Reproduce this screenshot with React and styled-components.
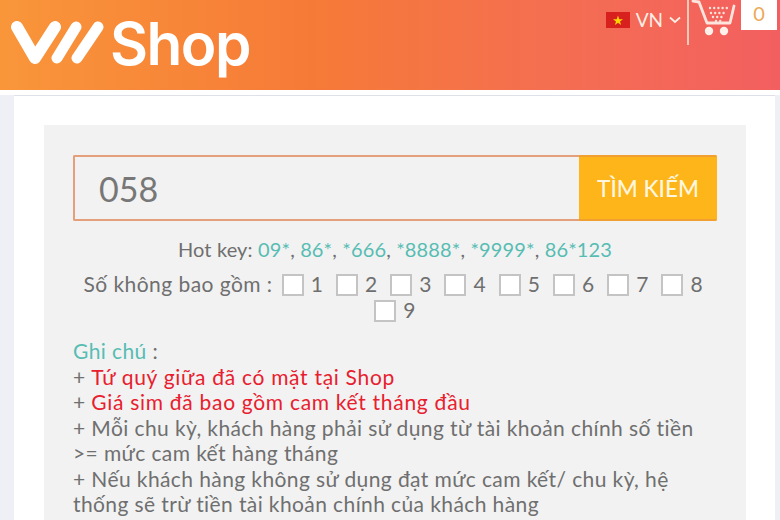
import React from "react";
import styled, { createGlobalStyle } from "styled-components";

const Global = createGlobalStyle`
  html, body { margin: 0; padding: 0; height: 520px; overflow: hidden; background: #fff; }
  * { box-sizing: border-box; }
  body { font-family: "Lato", "Noto Sans", sans-serif; }
`;

const Page = styled.div`
  width: 780px;
  height: 520px;
  overflow: hidden;
  background: #fff;
`;

const Header = styled.header`
  height: 90px;
  display: flex;
  justify-content: space-between;
  align-items: flex-start;
  overflow: hidden;
  background: linear-gradient(90deg, #f9963a 0%, #f67a37 40%, #f46e52 72%, #f35f60 100%);
`;

const Logo = styled.div`
  display: flex;
  align-items: center;
  gap: 6px;
  padding: 9px 0 0 10px;
`;

const LogoWord = styled.span`
  font-family: "Inter", sans-serif;
  font-size: 58.5px;
  line-height: 70px;
  font-weight: 600;
  letter-spacing: -1.5px;
  color: #fff;
`;

const HeaderRight = styled.div`
  display: flex;
  align-items: flex-start;
`;

const Lang = styled.div`
  display: flex;
  align-items: center;
  gap: 6px;
  padding: 9px 6px 0 0;
  color: #fdeee4;
  font-size: 19px;
  line-height: 22px;
`;

const Divider = styled.div`
  width: 2px;
  height: 45px;
  background: #f9c9b8;
`;

const CartIcon = styled.svg`
  display: block;
  width: 48px;
  height: 36px;
  margin-left: 1px;
`;

const CartCount = styled.div`
  width: 36px;
  height: 30px;
  margin: 0 3px;
  background: #fff;
  color: #eda958;
  font-size: 20px;
  line-height: 26px;
  text-align: center;
`;

const Body = styled.main`
  height: 430px;
  padding: 5px 5px 0 14px;
  background: linear-gradient(#fff 0 5px, #eef0f6 5px);
`;

const Card = styled.section`
  height: 425px;
  padding: 29px 29px 0 30px;
  background: #fff;
  border-top: 1px solid #dfe1e8;
`;

const Panel = styled.div`
  height: 396px;
  padding: 30px 29px 0;
  background: #f2f2f2;
  color: #6f6f6f;
  font-size: 20px;
`;

const Search = styled.div`
  display: flex;
  height: 66px;
  border-radius: 2px;
  overflow: hidden;
`;

const Field = styled.div`
  flex: 1;
  padding-left: 24px;
  border: 2px solid #e3a07a;
  border-right: 0;
  font-size: 34px;
  line-height: 64px;
  color: #777;
`;

const SearchButton = styled.button`
  width: 138px;
  border: 0;
  border-top: 2px solid #f0a030;
  border-bottom: 2px solid #f0a030;
  background: #fdb51a;
  color: #fff6df;
  font: 500 22.5px "Lato", sans-serif;
  padding: 0;
`;

const HotKey = styled.p`
  margin: 15px 0 0;
  line-height: 26px;
  letter-spacing: 0.15px;
  text-align: center;
`;

const Teal = styled.span`
  color: #57bdb2;
`;

const Exclude = styled.div`
  margin-top: 9px;
  text-align: center;
  line-height: 26px;
  font-size: 21px;
  letter-spacing: 0.45px;
`;

const Digit = styled.label`
  display: inline-flex;
  align-items: center;
  gap: 7px;
  margin: 0 3.4px;
  vertical-align: top;
`;

const Box = styled.span`
  display: block;
  width: 22px;
  height: 22px;
  margin-top: 2px;
  background: #fff;
  border: 2px solid #c4c4c4;
`;

const Notes = styled.div`
  margin-top: 15px;
  padding-right: 10px;
  line-height: 25.5px;
  font-size: 21px;
  letter-spacing: 0.4px;
`;

const Red = styled.span`
  color: #e8202e;
  letter-spacing: 0.7px;
`;

const digits = [1, 2, 3, 4, 5, 6, 7, 8, 9];

export default function App() {
  return (
    <Page>
      <Global />
      <Header>
        <Logo>
          <svg width="94" height="46" viewBox="0 0 94 46" fill="none" stroke="#fff" strokeLinecap="round" strokeLinejoin="round">
            <path d="M7 6 L25 37 L45 6" strokeWidth="12" />
            <path d="M47 37 L66 6" strokeWidth="11" />
            <path d="M67 37 L88 6" strokeWidth="11" />
          </svg>
          <LogoWord>Shop</LogoWord>
        </Logo>
        <HeaderRight>
          <Lang>
            <svg width="24" height="16" viewBox="0 0 24 16">
              <rect width="24" height="16" fill="#d8201f" />
              <polygon points="12,3.5 13.3,7.2 17,7.2 14,9.4 15.1,13 12,10.8 8.9,13 10,9.4 7,7.2 10.7,7.2" fill="#fcd600" />
            </svg>
            <span>VN</span>
            <svg width="12" height="8" viewBox="0 0 12 8" fill="none" stroke="#fdeee4" strokeWidth="1.8">
              <path d="M1 1.5 L6 6 L11 1.5" />
            </svg>
          </Lang>
          <Divider />
          <CartIcon viewBox="0 0 48 36" fill="none" stroke="#fde4dc" strokeLinecap="round">
            <path d="M3 1 L9 2 L17 23 H40 L44 6" strokeWidth="2.8" strokeLinejoin="round" />
            <path d="M20 8 H37 M21 13 H35 M23 17 H33 M26 21 H31" strokeWidth="2.4" strokeDasharray="0 4.2" />
            <circle cx="19" cy="31" r="4.2" fill="#fff0ea" stroke="none" />
            <circle cx="34" cy="31" r="4.2" fill="#fff0ea" stroke="none" />
          </CartIcon>
          <CartCount>0</CartCount>
        </HeaderRight>
      </Header>
      <Body>
        <Card>
          <Panel>
            <Search>
              <Field>058</Field>
              <SearchButton>TÌM KIẾM</SearchButton>
            </Search>
            <HotKey>
              Hot key: <Teal>09*</Teal>, <Teal>86*</Teal>, <Teal>*666</Teal>, <Teal>*8888*</Teal>, <Teal>*9999*</Teal>, <Teal>86*123</Teal>
            </HotKey>
            <Exclude>
              Số không bao gồm :{" "}
              {digits.map((d) => (
                <React.Fragment key={d}>
                  <Digit>
                    <Box />
                    {d}
                  </Digit>{" "}
                </React.Fragment>
              ))}
            </Exclude>
            <Notes>
              <Teal>Ghi chú</Teal> :
              <br />+ <Red>Tứ quý giữa đã có mặt tại Shop</Red>
              <br />+ <Red>Giá sim đã bao gồm cam kết tháng đầu</Red>
              <br />+ Mỗi chu kỳ, khách hàng phải sử dụng từ tài khoản chính số tiền &gt;= mức cam kết hàng tháng
              <br />+ Nếu khách hàng không sử dụng đạt mức cam kết/ chu kỳ, hệ thống sẽ trừ tiền tài khoản chính của khách hàng
            </Notes>
          </Panel>
        </Card>
      </Body>
    </Page>
  );
}
